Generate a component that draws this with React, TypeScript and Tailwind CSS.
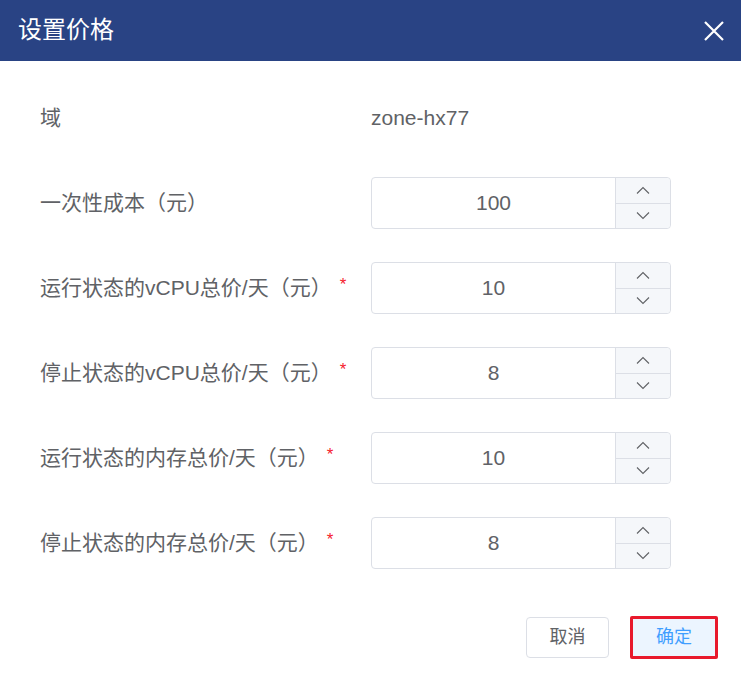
import { useState } from "react";

const FONT = '"Liberation Sans", "Noto Sans CJK SC", sans-serif';

const ROWS = [
  { label: "一次性成本（元）", value: 100, required: false },
  { label: "运行状态的vCPU总价/天（元）", value: 10, required: true },
  { label: "停止状态的vCPU总价/天（元）", value: 8, required: true },
  { label: "运行状态的内存总价/天（元）", value: 10, required: true },
  { label: "停止状态的内存总价/天（元）", value: 8, required: true },
];

function Chevron({ up }: { up?: boolean }) {
  return (
    <svg width="14" height="8" viewBox="0 0 14 8" fill="none" stroke="#606266" strokeWidth="1.1">
      {up ? <path d="M1 7.5L7 1.5L13 7.5" /> : <path d="M1 0.5L7 6.5L13 0.5" />}
    </svg>
  );
}

function NumberInput({ value, onChange }: { value: number; onChange: (v: number) => void }) {
  return (
    <div className="flex h-[52px] w-[300px] rounded-[4px] border border-[#dcdfe6] bg-white">
      <div className="flex flex-1 items-center justify-center text-[21px] text-[#606266]">{value}</div>
      <div className="flex w-[55px] flex-col border-l border-[#dcdfe6] bg-[#f5f7fa] rounded-r-[4px]">
        <button
          className="flex flex-1 items-center justify-center border-b border-[#dcdfe6]"
          onClick={() => onChange(value + 1)}
        >
          <Chevron up />
        </button>
        <button className="flex flex-1 items-center justify-center" onClick={() => onChange(value - 1)}>
          <Chevron />
        </button>
      </div>
    </div>
  );
}

export default function App() {
  const [values, setValues] = useState(ROWS.map((r) => r.value));

  return (
    <div className="h-[679px] w-[741px] bg-white" style={{ fontFamily: FONT }}>
      <div className="flex h-[61px] items-center justify-between bg-[#294384] pl-[18px] pr-[16px]">
        <h1 className="-mt-[2px] text-[24px] text-white">设置价格</h1>
        <svg width="22" height="22" viewBox="0 0 22 22" stroke="white" strokeWidth="2.2" fill="none">
          <path d="M2 2L20 20M20 2L2 20" />
        </svg>
      </div>

      <div className="flex flex-col gap-[33px] pl-[40px] pt-[31px]">
        <div className="flex h-[52px] items-center">
          <div className="w-[331px] text-[21px] text-[#606266]">域</div>
          <div className="text-[21px] text-[#606266]">zone-hx77</div>
        </div>
        {ROWS.map((row, i) => (
          <div key={row.label} className="flex h-[52px] items-center">
            <div className="flex w-[331px] items-center text-[21px] text-[#606266]">
              {row.label}
              {row.required && (
                <span className="ml-[8px] -mt-[6px] text-[17px] text-[#f5222d]">*</span>
              )}
            </div>
            <NumberInput
              value={values[i]}
              onChange={(v) => setValues(values.map((x, j) => (j === i ? v : x)))}
            />
          </div>
        ))}
      </div>

      <div className="mt-[47px] flex items-center justify-end gap-[21px] pr-[23px]">
        <button className="h-[41px] w-[83px] rounded-[4px] border border-[#dcdfe6] bg-white text-[18px] text-[#606266]">
          取消
        </button>
        <button className="h-[43px] w-[88px] rounded-[2px] border-[3px] border-[#e8192c] bg-[#ecf5ff] text-[18px] text-[#409eff]">
          确定
        </button>
      </div>
    </div>
  );
}
